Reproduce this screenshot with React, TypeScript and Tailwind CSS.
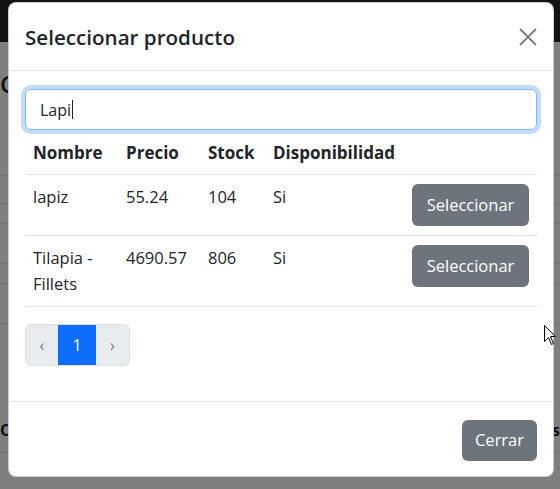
import React from 'react';

const productos = [
    { id: 1, nombre: 'lapiz', precio: '55.24', stock: '104', disponible: 'Si' },
    { id: 2, nombre: 'Tilapia - Fillets', precio: '4690.57', stock: '806', disponible: 'Si' },
];

function CloseIcon() {
    return (
        <svg width="18" height="18" viewBox="0 0 18 18" className="text-[#212529] opacity-60">
            <path d="M1 1L17 17M17 1L1 17" stroke="currentColor" strokeWidth="1.8" />
        </svg>
    );
}

function Cursor() {
    return (
        <svg width="13" height="21" viewBox="0 0 13 21" className="absolute left-[544px] top-[325px]">
            <path d="M0.5 0.5V16.5L4.5 12.5L7.5 19.5L9.5 18.5L6.5 11.5H11.5Z" fill="white" stroke="black" strokeWidth="1" />
        </svg>
    );
}

export default function App() {
    return (
        <div className="relative h-[489px] w-[560px] overflow-hidden bg-white font-['Open_Sans',sans-serif] text-[#212529]">
            {/* page behind the modal */}
            <div className="h-[42px] bg-[#212529]" />
            <div className="flex h-[133px] flex-col">
                <h2 className="mt-[22px] text-[24px] font-semibold leading-[40px]">Compras</h2>
            </div>
            <div className="border-t border-[#dee2e6]">
                <div className="h-[28px] border-b border-[#dee2e6]" />
                <div className="h-[20px] border-b border-[#dee2e6]" />
                <div className="h-[40px] border-b border-[#dee2e6]" />
                <div className="h-[20px] border-b border-[#dee2e6]" />
                <div className="h-[40px] border-b border-[#dee2e6]" />
                <div className="flex h-[129px] items-end justify-between border-b border-[#dee2e6] pb-[10px] text-[16px] font-bold">
                    <span>Orden</span>
                    <span>os</span>
                </div>
            </div>

            <div className="absolute inset-0 bg-black/50" />

            {/* modal */}
            <div className="absolute left-2 top-[2px] w-[546px] rounded-[8px] border border-black/20 bg-white">
                <div className="flex h-[68px] items-center justify-between border-b border-[#dee2e6] px-4">
                    <h5 className="text-[20.6px] font-semibold leading-[30px]">Seleccionar producto</h5>
                    <button className="flex h-[18px] w-[18px] items-center justify-center">
                        <CloseIcon />
                    </button>
                </div>

                <div className="px-4 pt-[18px] pb-[35px]">
                    <div className="flex h-[41px] items-center rounded-[6px] border border-[#86b7fe] px-[14px] text-[16px] ring-4 ring-[#0d6efd]/25">
                        <span>Lapi</span>
                        <span className="ml-px inline-block h-[19px] w-px bg-[#212529]" />
                    </div>

                    <table className="mt-[2px] w-full table-fixed text-left text-[16.5px]">
                        <thead>
                            <tr className="border-b border-[#dee2e6]">
                                <th className="w-[93px] px-2 py-2 text-[17px] font-bold leading-[26px]">Nombre</th>
                                <th className="w-[82px] px-2 py-2 text-[17px] font-bold leading-[26px]">Precio</th>
                                <th className="w-[65px] px-2 py-2 text-[17px] font-bold leading-[26px]">Stock</th>
                                <th className="w-[139px] px-2 py-2 text-[17px] font-bold leading-[26px]">Disponibilidad</th>
                                <th className="px-2 py-2" />
                            </tr>
                        </thead>
                        <tbody>
                            {productos.map((p) => (
                                <tr key={p.id} className="border-b border-[#dee2e6]">
                                    <td className="px-2 py-[9px] align-top leading-[26px]">{p.nombre}</td>
                                    <td className="px-2 py-[9px] align-top leading-[26px]">{p.precio}</td>
                                    <td className="px-2 py-[9px] align-top leading-[26px]">{p.stock}</td>
                                    <td className="px-2 py-[9px] align-top leading-[26px]">{p.disponible}</td>
                                    <td className="px-2 py-[9px] text-right align-top">
                                        <button className="h-[42px] w-[117px] rounded-[6px] bg-[#6c757d] text-[16.5px] text-white">
                                            Seleccionar
                                        </button>
                                    </td>
                                </tr>
                            ))}
                        </tbody>
                    </table>

                    <div className="mt-[17px] flex h-[42px] w-fit overflow-hidden rounded-[6px] border border-[#dee2e6] bg-[#e9ecef] text-[16px]">
                        <span className="flex w-[32px] items-center justify-center text-[#6c757d]">‹</span>
                        <span className="flex w-[38px] items-center justify-center bg-[#0d6efd] text-white">1</span>
                        <span className="flex w-[33px] items-center justify-center text-[#6c757d]">›</span>
                    </div>
                </div>

                <div className="flex justify-end border-t border-[#dee2e6] px-4 pt-[18px] pb-[15px]">
                    <button className="h-[41px] w-[75px] rounded-[6px] bg-[#6c757d] text-[16.5px] text-white">Cerrar</button>
                </div>
            </div>

            <Cursor />
        </div>
    );
}
